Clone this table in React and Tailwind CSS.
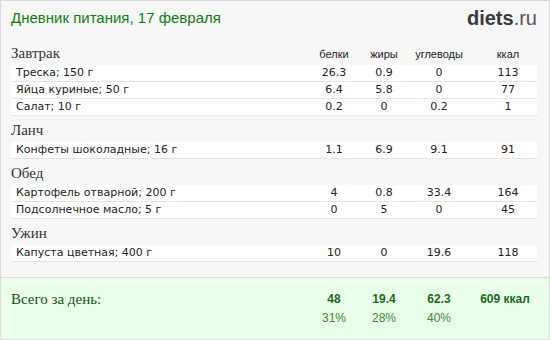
import React from "react";

const sections = [
  {
    name: "Завтрак",
    rows: [
      ["Треска; 150 г", "26.3", "0.9", "0", "113"],
      ["Яйца куриные; 50 г", "6.4", "5.8", "0", "77"],
      ["Салат; 10 г", "0.2", "0", "0.2", "1"],
    ],
  },
  { name: "Ланч", rows: [["Конфеты шоколадные; 16 г", "1.1", "6.9", "9.1", "91"]] },
  {
    name: "Обед",
    rows: [
      ["Картофель отварной; 200 г", "4", "0.8", "33.4", "164"],
      ["Подсолнечное масло; 5 г", "0", "5", "0", "45"],
    ],
  },
  { name: "Ужин", rows: [["Капуста цветная; 400 г", "10", "0", "19.6", "118"]] },
];

const grid = "grid grid-cols-[1fr_50px_50px_60px_68px]";
const label = "pb-[4px] text-center text-[11px] leading-[13px] text-[#222222] font-['Liberation_Sans',sans-serif]";

export default function App() {
  return (
    <div className="w-[550px] h-[340px] border border-[#dcdcdc] bg-[#f7f7f7] flex flex-col overflow-hidden">
      <div className="flex items-start justify-between pl-[10px] pr-[12px] pt-[8px] h-[40px]">
        <div className="text-[15px] leading-[18px] text-[#0f7f0f] font-['Liberation_Sans',sans-serif]">
          Дневник питания, 17 февраля
        </div>
        <div className="text-[20px] leading-[20px] font-['Liberation_Sans',sans-serif] -mt-[1px]">
          <span className="font-bold text-[#3a3a3a]">diets</span>
          <span className="text-[#555555]">.ru</span>
        </div>
      </div>
      <div className="flex-1 pl-[10px] pr-[12px]">
        {sections.map((s, i) => (
          <div key={s.name}>
            <div className={i === 0 ? `${grid} h-[24px] items-end` : `${grid} h-[26px] items-end`}>
              <div className="pb-[3px] text-[15px] leading-[18px] text-[#333333] font-['Liberation_Serif',serif]">
                {s.name}
              </div>
              {i === 0 && (
                <>
                  <div className={label}>белки</div>
                  <div className={label}>жиры</div>
                  <div className={label}>углеводы</div>
                  <div className={`${label} pl-[10px]`}>ккал</div>
                </>
              )}
            </div>
            {s.rows.map((r) => (
              <div
                key={r[0]}
                className={`${grid} h-[17px] bg-white border-b border-[#e4e4e4] items-center text-[11px] leading-[16px] text-[#222222] font-['DejaVu_Sans',sans-serif]`}
              >
                <div className="pl-[5px] whitespace-nowrap">{r[0]}</div>
                <div className="text-center">{r[1]}</div>
                <div className="text-center">{r[2]}</div>
                <div className="text-center">{r[3]}</div>
                <div className="pl-[10px] text-center">{r[4]}</div>
              </div>
            ))}
          </div>
        ))}
      </div>
      <div className="h-[62px] border-t border-[#dcdcdc] bg-[#eaffea] pl-[10px] pr-[12px] pt-[12px]">
        <div className={grid}>
          <div className="text-[15px] leading-[18px] text-[#145214] font-['Liberation_Serif',serif]">Всего за день:</div>
          <div className="text-center text-[12px] leading-[18px] font-bold text-[#1d6a1d] font-['Liberation_Sans',sans-serif]">48</div>
          <div className="text-center text-[12px] leading-[18px] font-bold text-[#1d6a1d] font-['Liberation_Sans',sans-serif]">19.4</div>
          <div className="text-center text-[12px] leading-[18px] font-bold text-[#1d6a1d] font-['Liberation_Sans',sans-serif]">62.3</div>
          <div className="pl-[4px] text-center text-[12px] leading-[18px] font-bold text-[#1d6a1d] font-['Liberation_Sans',sans-serif]">609 ккал</div>
          <div></div>
          <div className="text-center text-[12px] leading-[21px] text-[#3b8a3b] font-['Liberation_Sans',sans-serif]">31%</div>
          <div className="text-center text-[12px] leading-[21px] text-[#3b8a3b] font-['Liberation_Sans',sans-serif]">28%</div>
          <div className="text-center text-[12px] leading-[21px] text-[#3b8a3b] font-['Liberation_Sans',sans-serif]">40%</div>
          <div></div>
        </div>
      </div>
    </div>
  );
}
